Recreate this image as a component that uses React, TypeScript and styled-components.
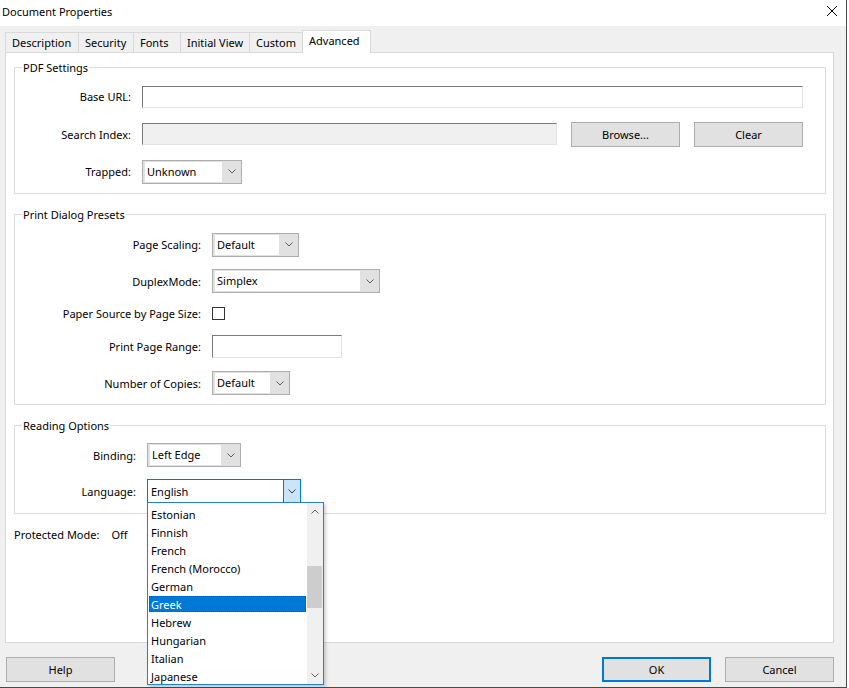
import styled, { createGlobalStyle } from 'styled-components';

const GlobalStyle = createGlobalStyle`
  body {
    margin: 0;
    background: #fff;
    font-family: 'Noto Sans', 'Liberation Sans', sans-serif;
    font-size: 11px;
    color: #000;
  }
`;

const Window = styled.div`
  width: 846px;
  height: 687px;
  background: #f0f0f0;
  border-right: 1px solid #4a4a4a;
  border-bottom: 1px solid #4a4a4a;
  display: flex;
  flex-direction: column;
`;

const TitleBar = styled.div`
  height: 26px;
  flex-shrink: 0;
  background: #fff;
  display: flex;
  justify-content: space-between;
  align-items: flex-start;
  padding: 4px 9px 0 2px;
  box-sizing: border-box;
  line-height: 15px;
`;

const CloseIcon = styled.svg`
  margin-top: 1.5px;
`;

const TabStrip = styled.div`
  height: 26px;
  flex-shrink: 0;
  display: flex;
  align-items: flex-end;
  padding-left: 5px;
`;

const Tab = styled.div<{ $w: number; $active?: boolean }>`
  width: ${(p) => p.$w}px;
  height: ${(p) => (p.$active ? 23 : 20)}px;
  box-sizing: border-box;
  margin-left: -1px;
  margin-bottom: ${(p) => (p.$active ? -1 : 0)}px;
  padding: 2px 0 0 6px;
  line-height: 15px;
  border: 1px solid #d9d9d9;
  border-bottom: none;
  background: ${(p) => (p.$active ? '#fff' : '#f0f0f0')};
  position: relative;
  z-index: ${(p) => (p.$active ? 2 : 1)};
  white-space: nowrap;

  &:first-child {
    margin-left: 0;
  }
`;

const Panel = styled.div`
  height: 591px;
  flex-shrink: 0;
  box-sizing: border-box;
  margin: 0 12px 0 5px;
  background: #fff;
  border: 1px solid #d9d9d9;
`;

const Group = styled.fieldset<{ $top: number }>`
  margin: ${(p) => p.$top}px 7px 0 8px;
  padding: 0;
  border: 1px solid #dcdcdc;
  min-width: 0;
`;

const GroupTitle = styled.legend`
  margin-left: 7px;
  padding: 0 1px;
  line-height: 15px;
`;

const FormGrid = styled.div<{ $label: number; $rows: string; $pad: string }>`
  display: grid;
  grid-template-columns: ${(p) => p.$label}px 1fr;
  grid-template-rows: ${(p) => p.$rows};
  column-gap: 11px;
  align-items: center;
  justify-items: start;
  padding: ${(p) => p.$pad};
`;

const Label = styled.div`
  justify-self: end;
  text-align: right;
  line-height: 15px;
  white-space: nowrap;
`;

const TextBox = styled.input<{ $w?: number; $h: number; $disabled?: boolean }>`
  width: ${(p) => (p.$w ? `${p.$w}px` : '100%')};
  height: ${(p) => p.$h}px;
  box-sizing: border-box;
  margin: 0;
  padding: 0 3px;
  border-style: solid;
  border-width: 1px;
  border-color: #7a7a7a #e3e3e3 #e3e3e3 #7a7a7a;
  background: ${(p) => (p.$disabled ? '#f0f0f0' : '#fff')};
  font: inherit;
  outline: none;
`;

const SearchRow = styled.div`
  display: flex;
  align-items: center;
  gap: 14px;
  width: 100%;
`;

const FlexBox = styled(TextBox)`
  flex: 1;
  width: auto;
  min-width: 0;
`;

const Button = styled.button<{ $default?: boolean }>`
  width: 109px;
  height: 25px;
  flex-shrink: 0;
  box-sizing: border-box;
  margin: 0;
  padding: 0;
  background: #e1e1e1;
  border: ${(p) => (p.$default ? '2px solid #0078d7' : '1px solid #adadad')};
  font: inherit;
  color: #000;
  line-height: 15px;
`;

const Combo = styled.div<{ $w: number }>`
  width: ${(p) => p.$w}px;
  height: 24px;
  box-sizing: border-box;
  display: flex;
  padding: 1px 0 1px 2px;
  border: 1px solid #adadad;
  background: #e1e1e1;
`;

const ComboValue = styled.div`
  flex: 1;
  background: #fff;
  padding-left: 2px;
  line-height: 19px;
  white-space: nowrap;
`;

const ComboArrow = styled.div`
  width: 19px;
  flex-shrink: 0;
  display: flex;
  align-items: center;
  justify-content: center;
`;

const FocusCombo = styled.div<{ $w: number }>`
  position: relative;
  width: ${(p) => p.$w}px;
  height: 24px;
  box-sizing: border-box;
  display: flex;
  border: 1px solid #0078d7;
  background: #fff;
`;

const FocusValue = styled.div`
  flex: 1;
  padding: 1px 0 0 3px;
  line-height: 22px;
`;

const FocusArrow = styled.div`
  width: 16px;
  flex-shrink: 0;
  border-left: 1px solid #0078d7;
  background: #cce4f7;
  display: flex;
  align-items: center;
  justify-content: center;
`;

const DropList = styled.div`
  position: absolute;
  top: 100%;
  left: -1px;
  width: 177px;
  height: 183px;
  box-sizing: border-box;
  border: 1px solid #2a7fc4;
  background: #fff;
  box-shadow: 2px 2px 3px rgba(0, 0, 0, 0.18);
  display: flex;
  z-index: 10;
`;

const Items = styled.div`
  flex: 1;
  padding: 2px 1px 0;
  overflow: hidden;
`;

const Item = styled.div`
  height: 18px;
  padding-top: 1px;
  box-sizing: border-box;
`;

const ItemText = styled.div<{ $selected?: boolean }>`
  height: 16px;
  box-sizing: border-box;
  padding-left: 1px;
  line-height: 15px;
  white-space: nowrap;
  background: ${(p) => (p.$selected ? '#0078d7' : 'transparent')};
  color: ${(p) => (p.$selected ? '#fff' : '#000')};
  border: 1px dotted ${(p) => (p.$selected ? '#4a4a4a' : 'transparent')};
`;

const Scrollbar = styled.div`
  width: 16px;
  flex-shrink: 0;
  background: #f0f0f0;
  display: flex;
  flex-direction: column;
`;

const ScrollButton = styled.div`
  height: 17px;
  display: flex;
  align-items: center;
  justify-content: center;
`;

const Track = styled.div`
  flex: 1;
`;

const Thumb = styled.div`
  margin: 46px 1px 0 0;
  height: 42px;
  background: #cdcdcd;
`;

const Checkbox = styled.div`
  width: 13px;
  height: 13px;
  box-sizing: border-box;
  border: 1px solid #333;
  background: #fff;
`;

const Protected = styled.div`
  display: flex;
  gap: 12px;
  margin: 13px 0 0 8px;
  line-height: 15px;
`;

const Footer = styled.div`
  display: flex;
  gap: 14px;
  padding: 14px 12px 0 6px;
`;

const Spacer = styled.div`
  flex: 1;
`;

const Chevron = ({ up, color = '#606060' }: { up?: boolean; color?: string }) => (
  <svg width="8" height="5" viewBox="0 0 8 5">
    <polyline
      points={up ? '0.5,4.5 4,1 7.5,4.5' : '0.5,0.5 4,4 7.5,0.5'}
      fill="none"
      stroke={color}
      strokeWidth="1"
    />
  </svg>
);

const Select = ({ w, value }: { w: number; value: string }) => (
  <Combo $w={w}>
    <ComboValue>{value}</ComboValue>
    <ComboArrow>
      <Chevron />
    </ComboArrow>
  </Combo>
);

const tabs = [
  { name: 'Description', w: 74 },
  { name: 'Security', w: 56 },
  { name: 'Fonts', w: 48 },
  { name: 'Initial View', w: 70 },
  { name: 'Custom', w: 54 },
  { name: 'Advanced', w: 69, active: true },
];

const languages = [
  'Estonian',
  'Finnish',
  'French',
  'French (Morocco)',
  'German',
  'Greek',
  'Hebrew',
  'Hungarian',
  'Italian',
  'Japanese',
];

export default function App() {
  return (
    <>
      <GlobalStyle />
      <Window>
        <TitleBar>
          <span>Document Properties</span>
          <CloseIcon width="10" height="10" viewBox="0 0 10 10">
            <path d="M0 0L10 10M10 0L0 10" stroke="#000" strokeWidth="1" />
          </CloseIcon>
        </TitleBar>

        <TabStrip>
          {tabs.map((t) => (
            <Tab key={t.name} $w={t.w} $active={t.active}>
              {t.name}
            </Tab>
          ))}
        </TabStrip>

        <Panel>
          <Group $top={7}>
            <GroupTitle>PDF Settings</GroupTitle>
            <FormGrid $label={116} $rows="37px 38px 37px" $pad="3px 22px 3px 0">
              <Label>Base URL:</Label>
              <TextBox $h={22} readOnly value="" />
              <Label>Search Index:</Label>
              <SearchRow>
                <FlexBox $h={22} $disabled readOnly value="" />
                <Button>Browse...</Button>
                <Button>Clear</Button>
              </SearchRow>
              <Label>Trapped:</Label>
              <Select w={100} value="Unknown" />
            </FormGrid>
          </Group>

          <Group $top={13}>
            <GroupTitle>Print Dialog Presets</GroupTitle>
            <FormGrid
              $label={186}
              $rows="37px 36px 29px 37px 36px"
              $pad="4px 22px 3px 0"
            >
              <Label>Page Scaling:</Label>
              <Select w={87} value="Default" />
              <Label>DuplexMode:</Label>
              <Select w={168} value="Simplex" />
              <Label>Paper Source by Page Size:</Label>
              <Checkbox />
              <Label>Print Page Range:</Label>
              <TextBox $w={130} $h={23} readOnly value="" />
              <Label>Number of Copies:</Label>
              <Select w={78} value="Default" />
            </FormGrid>
          </Group>

          <Group $top={13}>
            <GroupTitle>Reading Options</GroupTitle>
            <FormGrid $label={121} $rows="36px 36px" $pad="4px 22px 4px 0">
              <Label>Binding:</Label>
              <Select w={94} value="Left Edge" />
              <Label>Language:</Label>
              <FocusCombo $w={154}>
                <FocusValue>English</FocusValue>
                <FocusArrow>
                  <Chevron color="#3a3a3a" />
                </FocusArrow>
                <DropList>
                  <Items>
                    {languages.map((l) => (
                      <Item key={l}>
                        <ItemText $selected={l === 'Greek'}>{l}</ItemText>
                      </Item>
                    ))}
                  </Items>
                  <Scrollbar>
                    <ScrollButton>
                      <Chevron up />
                    </ScrollButton>
                    <Track>
                      <Thumb />
                    </Track>
                    <ScrollButton>
                      <Chevron />
                    </ScrollButton>
                  </Scrollbar>
                </DropList>
              </FocusCombo>
            </FormGrid>
          </Group>

          <Protected>
            <span>Protected Mode:</span>
            <span>Off</span>
          </Protected>
        </Panel>

        <Footer>
          <Button>Help</Button>
          <Spacer />
          <Button $default>OK</Button>
          <Button>Cancel</Button>
        </Footer>
      </Window>
    </>
  );
}
